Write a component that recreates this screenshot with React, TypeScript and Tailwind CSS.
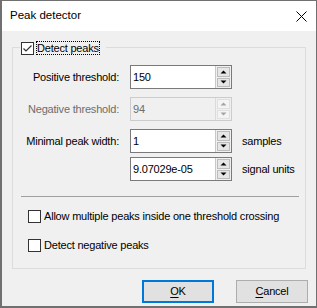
import React from "react";

const font = "font-['Liberation_Sans',Arial,sans-serif]";

const Arrow = ({ up, disabled }: { up?: boolean; disabled?: boolean }) => (
  <svg width="7" height="4" viewBox="0 0 7 4" className="block">
    <path
      d={up ? "M3.5 0.5 L6.5 3.5 L0.5 3.5 Z" : "M0.5 0.5 L6.5 0.5 L3.5 3.5 Z"}
      fill={disabled ? "#a3a3a3" : "#000"}
    />
  </svg>
);

const SpinBox = ({ value, disabled }: { value: string; disabled?: boolean }) => (
  <div
    className={`flex h-[24px] w-[102px] border ${
      disabled ? "border-[#cccccc] bg-[#f0f0f0]" : "border-[#7a7a7a] bg-white"
    }`}
  >
    <div
      className={`flex flex-1 items-center pl-[2px] ${
        disabled ? "text-[#6d6d6d]" : "text-black"
      }`}
    >
      {value}
    </div>
    <div
      className={`flex w-[16px] flex-col gap-[1px] border-l p-[1px] ${
        disabled ? "border-[#dadada] bg-[#f0f0f0]" : "border-[#c8c8c8] bg-[#f0f0f0]"
      }`}
    >
      <div
        className={`flex flex-1 items-center justify-center border ${
          disabled ? "border-[#e0e0e0] bg-[#f4f4f4]" : "border-[#bcbcbc] bg-[#e6e6e6]"
        }`}
      >
        <Arrow up disabled={disabled} />
      </div>
      <div
        className={`flex flex-1 items-center justify-center border ${
          disabled ? "border-[#e0e0e0] bg-[#f4f4f4]" : "border-[#bcbcbc] bg-[#e6e6e6]"
        }`}
      >
        <Arrow disabled={disabled} />
      </div>
    </div>
  </div>
);

const CheckBox = ({ checked }: { checked?: boolean }) => (
  <span className="flex h-[13px] w-[13px] shrink-0 items-center justify-center border border-[#333333] bg-white">
    {checked && (
      <svg width="11" height="11" viewBox="0 0 11 11">
        <path d="M1.5 5.5 L4 8 L9.5 2.5" stroke="#333" strokeWidth="1.2" fill="none" />
      </svg>
    )}
  </span>
);

const Row = ({
  label,
  value,
  unit,
  disabled,
  className = "",
}: {
  label?: string;
  value: string;
  unit?: string;
  disabled?: boolean;
  className?: string;
}) => (
  <div className={`flex items-center ${className}`}>
    <div
      className={`w-[106px] text-right ${disabled ? "text-[#6d6d6d]" : "text-black"}`}
    >
      {label}
    </div>
    <div className="ml-[11px]">
      <SpinBox value={value} disabled={disabled} />
    </div>
    {unit && <div className="ml-[10px]">{unit}</div>}
  </div>
);

export default function App() {
  return (
    <div
      className={`${font} h-[308px] w-[317px] bg-[#707070] pb-[2px] pl-[2px] pr-[1px] pt-[1px] text-[11px] tracking-[-0.2px] text-black`}
    >
      <div className="flex h-full flex-col bg-[#f0f0f0]">
        {/* title bar */}
        <div className="flex h-[30px] shrink-0 items-center justify-between bg-white pl-[8px] pr-[9px]">
          <span className="text-[11.5px] tracking-normal">Peak detector</span>
          <svg width="11" height="11" viewBox="0 0 11 11">
            <path d="M0.5 0.5 L10.5 10.5 M10.5 0.5 L0.5 10.5" stroke="#000" strokeWidth="1" />
          </svg>
        </div>

        {/* group box */}
        <div className="relative ml-[10px] mt-[16px] h-[222px] w-[294px] border border-[#dcdcdc] pt-[17px]">
          <div className="absolute left-[7px] top-[-7px] flex items-center bg-[#f0f0f0] pl-[1px] pr-[6px]">
            <CheckBox checked />
            <span className="ml-[2px] border border-dotted border-black leading-[12px]">
              Detect peaks
            </span>
          </div>

          <Row label="Positive threshold:" value="150" />
          <Row label="Negative threshold:" value="94" disabled className="mt-[8px]" />
          <Row label="Minimal peak width:" value="1" unit="samples" className="mt-[8px]" />
          <Row value="9.07029e-05" unit="signal units" className="mt-[4px]" />

          <div className="ml-[8px] mr-[6px] mt-[15px] h-[1px] bg-[#a0a0a0]" />

          <label className="ml-[15px] mt-[13px] flex h-[13px] items-center gap-[3px]">
            <CheckBox />
            <span>Allow multiple peaks inside one threshold crossing</span>
          </label>
          <label className="ml-[15px] mt-[16px] flex h-[13px] items-center gap-[3px]">
            <CheckBox />
            <span>Detect negative peaks</span>
          </label>
        </div>

        {/* buttons */}
        <div className="mt-[11px] flex justify-end gap-[22px] pr-[8px]">
          <button className="flex h-[23px] w-[72px] items-center justify-center border-2 border-[#0078d7] bg-[#e1e1e1]">
            <span>
              <span className="underline underline-offset-2">O</span>K
            </span>
          </button>
          <button className="flex h-[23px] w-[72px] items-center justify-center border border-[#adadad] bg-[#e1e1e1]">
            <span>
              <span className="underline underline-offset-2">C</span>ancel
            </span>
          </button>
        </div>
      </div>
    </div>
  );
}
